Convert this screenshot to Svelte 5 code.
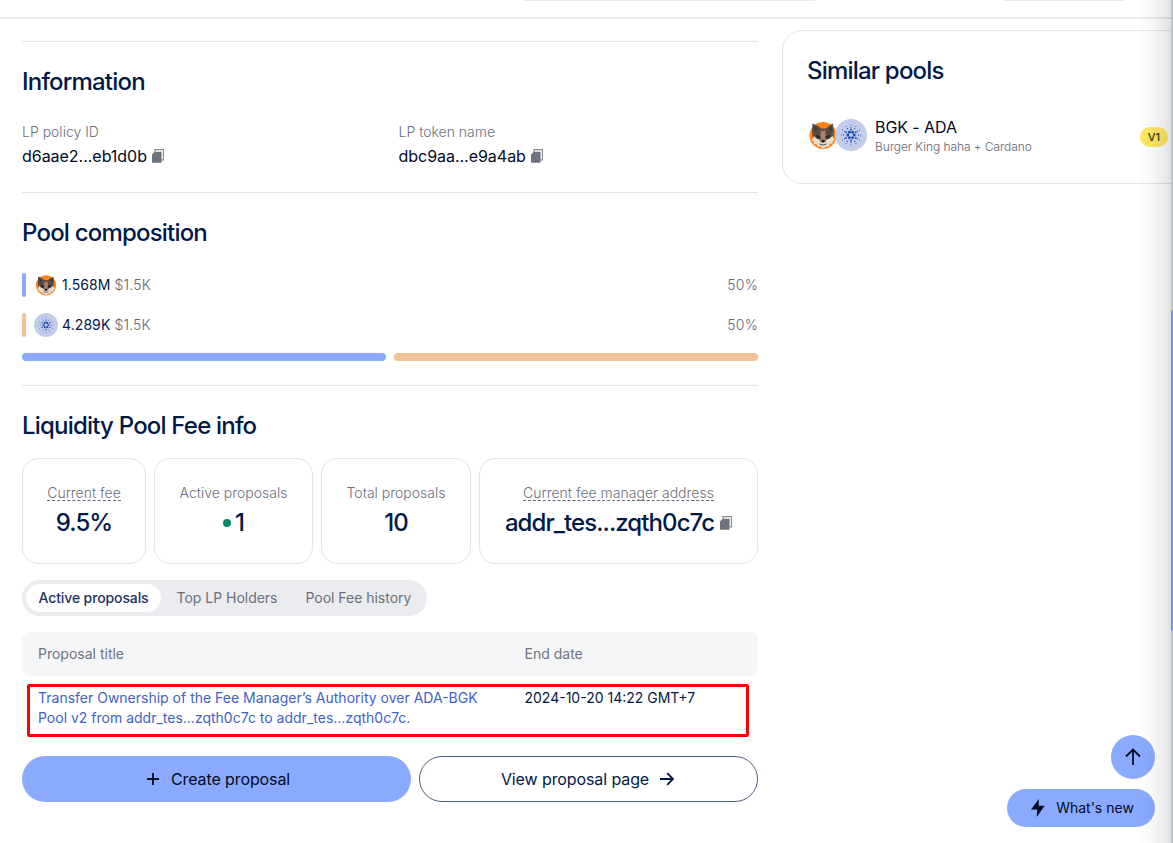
<script>
  const stats = [
    { label: 'Current fee', value: '9.5%', width: 124, hint: true },
    { label: 'Active proposals', value: '1', width: 159, dot: true },
    { label: 'Total proposals', value: '10', width: 150 },
    { label: 'Current fee manager address', value: 'addr_tes...zqth0c7c', width: 279, hint: true, copy: true },
  ];
  const assets = [
    { amount: '1.568M', usd: '$1.5K', share: 50, color: '#8aaaff', fox: true },
    { amount: '4.289K', usd: '$1.5K', share: 50, color: '#f2c396' },
  ];
  const rings = [
    { n: 6, r: 3.2, s: 1.4, a: 0 },
    { n: 6, r: 5.5, s: 0.9, a: 30 },
    { n: 12, r: 7.4, s: 0.65, a: 0 },
    { n: 12, r: 9.8, s: 0.5, a: 30 },
  ];
  const dots = rings.flatMap(({ n, r, s, a }) =>
    Array.from({ length: n }, (_, i) => {
      const t = ((i * 360) / n + a) * Math.PI / 180;
      return { x: 16 + r * Math.cos(t), y: 16 + r * Math.sin(t), s };
    })
  );
</script>

{#snippet copyIcon()}
  <svg class="copy" width="12" height="14" viewBox="0 0 12 14">
    <path d="M3 3V.6h8.500v10.300H9.500" fill="none" stroke="#858891" stroke-width="1.2" />
    <path d="M2.800 2.800H9.600v10c0 .7-.3 1-1 1H1c-.7 0-1-.3-1-1V5.600Z" fill="#70737d" />
  </svg>
{/snippet}

{#snippet fox(size)}
  <svg class="token" width={size} height={size} viewBox="0 0 32 32">
    <circle cx="16" cy="16.500" r="13.500" fill="#ff8119" />
    <path d="M5.500 4.500 11 7l3 2.500h4.500L22.500 6.500 25.800 4.500 26.800 12 26.500 18 23 25H9L6 19 5 12Z" fill="#5a4a42" />
    <path d="M7.300 7.500 10.500 9.500 8 13ZM24.700 7.500 22 9.500 24.500 13Z" fill="#33363c" />
    <path d="M7 17 4.500 22l2.500.5L6.800 25l3 .3.700 2 3 .4L16 29.500l3-1.800 3-.4.700-2.300 3-.5v-2.300l2-1L25.500 17 22 20l-2.500.5L18.500 23h-5L12.300 20.500 10 20Z" fill="#e9dfcc" />
    <path d="m14.300 11 1.700 1.500 2-1.500.7 5-.7 3 1.200 3.500-3.200 1-3.200-1L14 19l-.7-3Z" fill="#a98373" />
    <path d="m9 15.700 4.500 1.700-1 1.800-3-1ZM23 15.700l-4.500 1.700 1 1.800 3-1Z" fill="#1e252c" />
    <path d="m14 21.500 2-.7 2 .7-.8 2h-2.400Z" fill="#222126" />
    <path d="M12.500 25q3.500 2 7 0" fill="none" stroke="#4c423d" stroke-width=".9" />
    <path d="m26 12.500 1.200 3-.7 3-1-3Z" fill="#3794a8" />
  </svg>
{/snippet}

{#snippet ada(size)}
  <svg class="token" width={size} height={size} viewBox="0 0 32 32">
    <circle cx="16" cy="16" r="16" fill="#c1cdea" />
    {#each dots as d}
      <circle cx={d.x} cy={d.y} r={d.s} fill="#1d46b5" />
    {/each}
  </svg>
{/snippet}

<div class="page">
  <header><i class="search"></i><i class="wallet"></i></header>
  <div class="columns">
    <main>
      <section>
        <h2>Information</h2>
        <div class="ids">
          <div>
            <div class="label">LP policy ID</div>
            <div class="id"><span>d6aae2...eb1d0b</span>{@render copyIcon()}</div>
          </div>
          <div>
            <div class="label">LP token name</div>
            <div class="id"><span>dbc9aa...e9a4ab</span>{@render copyIcon()}</div>
          </div>
        </div>
      </section>

      <section>
        <h2>Pool composition</h2>
        <div class="assets">
          {#each assets as a}
            <div class="asset">
              <i style:background={a.color}></i>
              {#if a.fox}{@render fox(24)}{:else}{@render ada(24)}{/if}
              <span class="amount">{a.amount}</span>
              <span class="usd">{a.usd}</span>
              <span class="share">{a.share}%</span>
            </div>
          {/each}
          <div class="bars">
            {#each assets as a}<i style:background={a.color} style:flex={a.share}></i>{/each}
          </div>
        </div>
      </section>

      <section>
        <h2>Liquidity Pool Fee info</h2>
        <div class="stats">
          {#each stats as s}
            <div class="stat" style:width="{s.width}px">
              <div class="label"><span class:hint={s.hint}>{s.label}</span></div>
              <div class="value">
                {#if s.dot}<i></i>{/if}<span>{s.value}</span>{#if s.copy}{@render copyIcon()}{/if}
              </div>
            </div>
          {/each}
        </div>
        <nav>
          <button class="active">Active proposals</button>
          <button>Top LP Holders</button>
          <button>Pool Fee history</button>
        </nav>
        <div class="row head"><span>Proposal title</span><span>End date</span></div>
        <div class="row body">
          <a href="#proposal">Transfer Ownership of the Fee Manager’s Authority over ADA-BGK<br />Pool v2 from addr_tes...zqth0c7c to addr_tes...zqth0c7c.</a>
          <span>2024-10-20 14:22 GMT+7</span>
          <div class="outline"></div>
        </div>
        <div class="actions">
          <button class="create">
            <svg width="14" height="14" viewBox="0 0 14 14"><path d="M7 1v12M1 7h12" /></svg>
            <span>Create proposal</span>
          </button>
          <button class="view">
            <span>View proposal page</span>
            <svg width="14" height="14" viewBox="0 0 14 14"><path d="M0 7h13M7.200 1.200 13 7l-5.800 5.800" /></svg>
          </button>
        </div>
      </section>
    </main>

    <aside>
      <h2>Similar pools</h2>
      <div class="pool">
        <div class="pair">{@render fox(32)}{@render ada(32)}</div>
        <div class="names">
          <div class="ticker">BGK - ADA</div>
          <div class="full">Burger King haha + Cardano</div>
        </div>
        <span class="version">V1</span>
      </div>
    </aside>
  </div>

  <div class="floating">
    <button class="up" aria-label="Scroll to top">
      <svg width="16" height="18" viewBox="0 0 16 18"><path d="M8 17V1.500M1 8.500l7-7 7 7" /></svg>
    </button>
    <button class="news">
      <svg width="14" height="18" viewBox="0 0 14 18"><path d="M7.800 0 7.700 6.800h5.900L5.800 18l.4-7.500H0Z" /></svg>
      <span>What's new</span>
    </button>
  </div>
  <div class="shade"></div>
  <div class="scrollbar"><i></i></div>
</div>

<style>
  :global(body) { margin: 0; background: #fff; overflow: hidden; }
  .page {
    position: relative; width: 1173px; height: 843px; overflow: hidden;
    font-family: Inter, sans-serif; font-size: 14px; color: #001947;
  }
  .page * { box-sizing: border-box; }
  svg { display: block; flex: none; }
  i { display: block; }
  button { border: 0; background: none; padding: 0; margin: 0; font: inherit; color: inherit; display: flex; align-items: center; justify-content: center; }
  header {
    height: 18px; border-bottom: 1px solid #e5e6ee; box-shadow: 0 1px 1px #f1f1f6;
    display: flex; align-items: flex-start; padding-left: 523px; gap: 188px;
  }
  header i { height: 1px; background: #e9eaef; border-radius: 0 0 2px 2px; }
  .search { width: 292px; }
  .wallet { width: 122px; }
  .columns { display: flex; gap: 24px; padding-left: 22px; align-items: flex-start; }
  main { width: 736px; flex: none; padding-top: 23px; }
  section { border-top: 1px solid #e4e5e8; padding: 24px 0; }
  h2 { margin: 0; font-size: 24px; line-height: 32px; font-weight: 500; letter-spacing: -0.8px; white-space: nowrap; }
  .label { line-height: 20px; font-size: 14px; font-weight: 300; color: #6b6f7a; white-space: nowrap; }
  .ids { display: grid; grid-template-columns: 360.500px 1fr; gap: 16px; margin-top: 24px; }
  .id { display: flex; align-items: center; gap: 5.500px; line-height: 24px; margin-top: 2px; font-size: 16px; letter-spacing: -0.03px; color: #000b1f; }
  .assets { display: flex; flex-direction: column; gap: 16px; margin-top: 24px; }
  .asset { display: flex; align-items: center; height: 24px; line-height: 20px; }
  .asset span { padding-bottom: 1px; }
  .asset > i { width: 4px; height: 24px; border-radius: 2px; margin-right: 8px; }
  .amount { margin: 0 4px; letter-spacing: 0.08px; }
  .usd, .share { font-weight: 300; color: #62666f; letter-spacing: 0.2px; }
  .share { margin-left: auto; }
  .bars { display: flex; gap: 8px; }
  .bars i { height: 8px; border-radius: 4px; }
  .stats { display: flex; gap: 8px; margin-top: 16px; }
  .stat { height: 106px; border: 1px solid #e4e5e8; border-radius: 16px; padding: 24px 0; display: flex; flex-direction: column; align-items: center; gap: 4px; flex: none; }
  .hint { display: inline-block; height: 16px; line-height: 16px; border-bottom: 1px dashed #646975; }
  .value { display: flex; align-items: center; font-size: 24px; font-weight: 500; line-height: 32px; letter-spacing: -0.92px; }
  .value i { width: 8px; height: 8px; border-radius: 50%; background: #008a67; margin-right: 4px; }
  .value :global(.copy) { margin-left: 6px; }
  nav { display: flex; width: 405px; height: 36px; padding: 4px; margin-top: 16px; border-radius: 18px; background: #ebecf0; color: #6b707b; font-weight: 400; white-space: nowrap; }
  nav button { flex: none; height: 28px; padding: 0 14px; line-height: 20px; letter-spacing: -0.02px; }
  nav .active { width: 135px; padding: 0; margin-right: 1.500px; background: #fff; color: #1d3260; border-radius: 14px; font-weight: 500; letter-spacing: -0.12px; }
  .row { display: grid; grid-template-columns: 486.500px 1fr; padding: 12px 16px; line-height: 20px; white-space: nowrap; }
  .head { height: 44px; margin-top: 16px; border-radius: 8px; background: #f5f6f8; color: #70747e; }
  .body { position: relative; height: 64px; }
  a { color: #3f5fcb; text-decoration: none; }
  .outline { position: absolute; left: 5px; top: 8px; width: 722px; height: 53px; border: 3px solid #fe0000; border-radius: 2px; }
  .actions { display: flex; gap: 8px; margin-top: 16px; font-size: 16px; letter-spacing: -0.1px; }
  .actions button { height: 46px; border-radius: 23px; letter-spacing: inherit; }
  .actions path, .up path { fill: none; stroke: currentColor; stroke-width: 1.800; }
  .create { width: 389px; background: #8aaaff; gap: 11px; padding-left: 3px; color: #000b1f; }
  .view { width: 339px; border: 1px solid #4d5e80 !important; gap: 11px; padding-right: 2px; }
  aside { width: 440px; height: 154px; flex: none; margin-top: 12px; padding: 24px; border: 1px solid #e4e5e8; border-radius: 20px; }
  .pool { display: flex; align-items: center; margin-top: 32px; height: 32px; }
  .pair { display: flex; }
  .pair :global(svg + svg) { margin-left: -4px; }
  .names { margin-left: 8px; padding-top: 2px; width: 265px; white-space: nowrap; }
  .ticker { font-size: 16px; line-height: 20px; color: #000b1f; letter-spacing: -0.08px; }
  .full { margin-top: 1px; font-size: 12px; line-height: 18px; font-weight: 300; color: #62666f; letter-spacing: -0.07px; }
  .version { width: 28px; height: 20px; border-radius: 10px; background: #ffe762; color: #37321b; font-size: 11px; font-weight: 500; line-height: 20px; text-align: center; margin-top: 4px; }
  .floating { position: absolute; right: 18px; bottom: 16px; display: flex; flex-direction: column; align-items: flex-end; gap: 10px; color: #000b1f; }
  .floating button { background: #8aaaff; }
  .up { width: 44px; height: 44px; border-radius: 50%; }
  .news { width: 148px; height: 38px; border-radius: 19px; gap: 11px; padding-left: 3px; }
  .news span { line-height: 20px; }
  .news path { fill: currentColor; }
  .shade { position: absolute; right: 2px; top: 0; bottom: 0; width: 34px; background: linear-gradient(90deg, #0000 0%, #00000006 40%, #00000014 80%, #00000020 100%); }
  .scrollbar { position: absolute; right: 0; top: 0; bottom: 0; width: 2px; padding-top: 310px; background: #bfc2ca; }
  .scrollbar i { height: 321px; background: #7795e2; border-radius: 1px; }
</style>
